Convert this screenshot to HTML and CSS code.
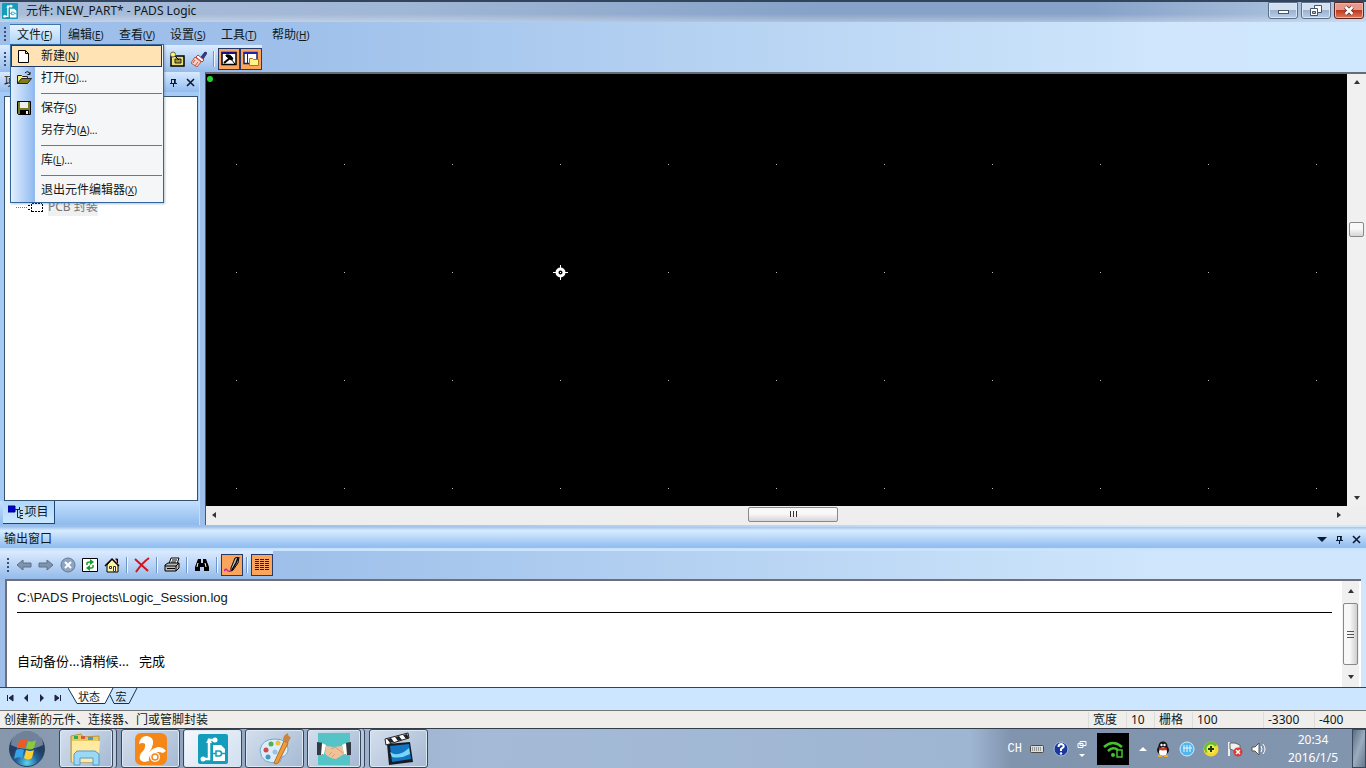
FILE: index.html
```html
<!DOCTYPE html>
<html lang="zh-CN">
<head>
<meta charset="utf-8">
<title>元件: NEW_PART* - PADS Logic</title>
<link rel="stylesheet" href="styles.css">
</head>
<body>
<svg class="defs" aria-hidden="true">
  <symbol id="pads" viewBox="0 0 30 30">
    <rect width="30" height="30" rx="2" fill="#149dba"/>
    <path d="M4 25h7V6h5" fill="none" stroke="#fff" stroke-width="2.5"/>
    <path d="M8 9l3-5 3 5z" fill="#fff"/><circle cx="17" cy="6" r="2.500" fill="#fff"/><circle cx="5" cy="25" r="2.500" fill="#fff"/>
    <path d="M15 11h8l4 4v12H15z" fill="#fff"/>
    <path d="M18 17h3a2.500 2.500 0 0 1 0 5h-3zM15 19.500h3m6 0h3" fill="none" stroke="#149dba" stroke-width="1.500"/>
  </symbol>
  <symbol id="pin" viewBox="0 0 9 9"><path d="M2.500 1v4.500M6 1v4.500M2 1.500h5M1 5.500h7M4.500 6v3" fill="none" stroke="#0b1a33"/><path d="M5 1h1.500v4H5z" fill="#0b1a33"/></symbol>
  <symbol id="cross" viewBox="0 0 9 9"><path d="M1 1l7 7M8 1L1 8" stroke="#0b1a33" stroke-width="1.600"/></symbol>
  <symbol id="tri" viewBox="0 0 8 8"><path d="M1 6l3-4 3 4z" fill="#333"/></symbol>
</svg>

<header class="titlebar">
  <svg class="app-icon"><use href="#pads"/></svg>
  <h1 class="title">元件: NEW_PART* - PADS Logic</h1>
  <div class="win-buttons">
    <button class="win-btn" aria-label="最小化"><svg width="28" height="15"><rect x="9.500" y="7.500" width="10" height="3" fill="#fff" stroke="#465468"/></svg></button>
    <button class="win-btn" aria-label="还原"><svg width="28" height="15"><path d="M12.500 2.500h7v7h-7z" fill="#fff" stroke="#465468"/><path d="M8.500 5.500h7v7h-7z" fill="#fff" stroke="#465468"/><path d="M10.500 8.500h3v2h-3z" fill="#a9bdd6" stroke="#465468"/></svg></button>
    <button class="win-btn close" aria-label="关闭"><svg width="28" height="15"><path d="M10.500 4l7 7m0-7l-7 7" stroke="#56302d" stroke-width="4"/><path d="M10.500 4l7 7m0-7l-7 7" stroke="#fff" stroke-width="2.500"/></svg></button>
  </div>
</header>

<div class="commands">
  <nav class="menubar">
    <i class="grip"></i>
    <div class="menu-slot">
      <button class="menu open">文件<span class="key">(<u>F</u>)</span></button>
      <div class="dropdown">
        <button class="entry active"><svg class="ico"><path d="M2.500 2.500h7l3 3v9h-10zM9.500 2.500v3h3" fill="#fff" stroke="#000"/></svg>新建<span class="key">(<u>N</u>)</span></button>
        <button class="entry"><svg class="ico"><path d="M1.500 13.500v-8h4l1 1h5v3" fill="#f6ec7b" stroke="#222"/><path d="M1.500 13.500l4-5h10l-4 5z" fill="#827b12" stroke="#222"/><path d="M9 3q3-3 5 1m0-2v2.500h-2.500" fill="none" stroke="#111"/></svg>打开<span class="key">(<u>O</u>)...</span></button>
        <hr class="sep">
        <button class="entry"><svg class="ico"><path d="M1.500 1.500h13v13h-12l-1-1z" fill="#777b22" stroke="#000"/><path d="M4 2h8v6H4z" fill="#eee"/><path d="M4 10h9v5H4z" fill="#000"/><path d="M10 11h2v3h-2z" fill="#eee"/></svg>保存<span class="key">(<u>S</u>)</span></button>
        <button class="entry"><i class="ico"></i>另存为<span class="key">(<u>A</u>)...</span></button>
        <hr class="sep">
        <button class="entry"><i class="ico"></i>库<span class="key">(<u>L</u>)...</span></button>
        <hr class="sep">
        <button class="entry"><i class="ico"></i>退出元件编辑器<span class="key">(<u>X</u>)</span></button>
      </div>
    </div>
    <button class="menu">编辑<span class="key">(<u>E</u>)</span></button>
    <button class="menu">查看<span class="key">(<u>V</u>)</span></button>
    <button class="menu">设置<span class="key">(<u>S</u>)</span></button>
    <button class="menu">工具<span class="key">(<u>T</u>)</span></button>
    <button class="menu">帮助<span class="key">(<u>H</u>)</span></button>
  </nav>
  <div class="toolbar main-tools">
    <i class="grip"></i>
    <button class="tool first" aria-label="元件"><svg class="ico"><path d="M2 5h13v10H2z" fill="#e7df75" stroke="#000" stroke-width="1.500"/><path d="M6 8h6v4H6z" fill="#a39b32" stroke="#222"/><path d="M5 4l5 5" stroke="#000"/><circle cx="4" cy="3.500" r="2.500" fill="#fff76b" stroke="#665"/></svg></button>
    <button class="tool" aria-label="刷新"><svg class="ico"><path d="M10 6l4-5 2 1-4 6z" fill="#2d3f94" stroke="#29306b"/><path d="M7 4l6 5-2 2-6-5z" fill="#fff" stroke="#b0413a"/><path d="M4 6l6 5-4 5-6-4z" fill="#f7d3c2" stroke="#c0534a"/><path d="M4 9l-2 3m5-1l-3 4" stroke="#c0534a"/></svg></button>
    <i class="bar"></i>
    <button class="tool on" aria-label="编辑工具"><svg class="ico"><path d="M1 1.500h14v12H1z" fill="#fff" stroke="#000" stroke-width="1.500"/><path d="M1 2h14" stroke="#118" stroke-width="2"/><path d="M3 12l6-5" stroke="#000" stroke-width="2"/><path d="M5 4q5-1 7 4l-2 1-5-4zM10 8l4 5" fill="#000" stroke="#000"/></svg></button>
    <button class="tool on" aria-label="项目浏览器"><svg class="ico"><path d="M1 1.500h13v11H1z" fill="#fff" stroke="#225" stroke-width="1.500"/><path d="M1 2h13" stroke="#22a" stroke-width="2"/><path d="M4.500 3v9" stroke="#225"/><path d="M6.500 14.500v-7h3l1 1h5v6z" fill="#fff388" stroke="#b3721c"/></svg></button>
  </div>
</div>

<main class="workspace">
  <aside class="project">
    <div class="panel-head"><span class="grow">项</span><button class="mini" aria-label="固定"><svg width="9" height="9"><use href="#pin"/></svg></button><button class="mini" aria-label="关闭"><svg width="9" height="9"><use href="#cross"/></svg></button></div>
    <div class="tree">
      <div class="node"><svg width="28" height="14"><path d="M0 7.500h12" stroke="#777" stroke-dasharray="1 1"/><path d="M16 3.500h10M16 11.500h10M15.500 4v8M26.500 4v8M12 5.500h3m-3 4h3" fill="none" stroke="#000" stroke-dasharray="2 1"/></svg><span class="node-name">PCB 封装</span></div>
    </div>
    <div class="project-tabs"><button class="project-tab"><svg width="16" height="14"><path d="M0 1h7v6H0z" fill="#00c" stroke="#008"/><path d="M7 4.500h4M9.500 5v7.500h2M15 5.500h-3v3h3M15 10.500h-3v3h3M11.500 2v3" fill="none" stroke="#222"/></svg>项目</button></div>
  </aside>
  <section class="view">
    <div class="view-row">
      <svg class="drawing" aria-label="绘图区">
        <defs><pattern id="grid" x="30" y="90" width="108" height="108" patternUnits="userSpaceOnUse"><rect width="1" height="1" fill="#bbb"/></pattern></defs>
        <rect width="100%" height="100%" fill="url(#grid)"/>
        <circle cx="4" cy="5" r="3" fill="#27d22f"/>
        <path d="M354.500 191v15M347 198.500h15" stroke="#fff"/><circle cx="354.500" cy="198.500" r="3.500" fill="#000" stroke="#fff" stroke-width="3"/><rect x="354" y="198" width="1" height="1" fill="#fff"/>
      </svg>
      <div class="vscroll"><svg class="arrow"><use href="#tri"/></svg><i class="space-a"></i><i class="thumb v-thumb"></i><i class="space-b"></i><svg class="arrow down"><use href="#tri"/></svg></div>
    </div>
    <div class="hscroll"><svg class="arrow left"><use href="#tri"/></svg><i class="space-c"></i><i class="thumb h-thumb"><svg width="9" height="7"><path d="M1.500 0v6m3-6v6m3-6v6" stroke="#333"/></svg></i><i class="space-d"></i><svg class="arrow right"><use href="#tri"/></svg></div>
  </section>
</main>

<section class="output">
  <div class="panel-head output-head"><span class="grow">输出窗口</span><button class="mini" aria-label="菜单"><svg width="10" height="9"><path d="M0 2h10L5 7z" fill="#0b1a33"/></svg></button><button class="mini" aria-label="固定"><svg width="9" height="9"><use href="#pin"/></svg></button><button class="mini" aria-label="关闭"><svg width="9" height="9"><use href="#cross"/></svg></button></div>
  <div class="toolbar out-tools">
    <i class="grip"></i>
    <button class="tool" aria-label="后退"><svg class="ico"><path d="M1 8l6-5v3h8v4H7v3z" fill="#7f93ad" stroke="#5d7189"/></svg></button>
    <button class="tool" aria-label="前进"><svg class="ico"><path d="M15 8L9 3v3H1v4h8v3z" fill="#7f93ad" stroke="#5d7189"/></svg></button>
    <button class="tool" aria-label="停止"><svg class="ico"><circle cx="8" cy="8" r="7" fill="#8ea5c2" stroke="#647b98"/><path d="M5 5l6 6m0-6l-6 6" stroke="#fff" stroke-width="2"/></svg></button>
    <button class="tool" aria-label="刷新"><svg class="ico"><path d="M.5 1.500h15v13H.5z" fill="#fff" stroke="#000"/><path d="M5 8V6q0-1 3-1M11 8v2q0 1-3 1" fill="none" stroke="#169b2c" stroke-width="1.500"/><path d="M8 2l4 3-4 3zM8 8l-4 3 4 3z" fill="#169b2c"/></svg></button>
    <button class="tool" aria-label="主页"><svg class="ico"><path d="M11.500 2h2v4" fill="#a22" stroke="#000"/><path d="M3 8v7h11V8L8 2z" fill="#fff4a0" stroke="#000"/><path d="M1 9l7-7 7 7" fill="none" stroke="#000" stroke-width="1.500"/><path d="M5.500 9.500h2v2h-2zM9.500 9.500h2v5h-2z" fill="#fff" stroke="#333"/></svg></button>
    <i class="bar"></i>
    <button class="tool" aria-label="清除"><svg class="ico"><path d="M1 2l13 12M15 1Q8 6 2 15" fill="none" stroke="#d5121b" stroke-width="2"/></svg></button>
    <i class="bar"></i>
    <button class="tool" aria-label="打印"><svg class="ico"><path d="M5 7l2-6h8l-2 6z" fill="#fff" stroke="#000"/><path d="M8 3h5M7 5h5" stroke="#000"/><path d="M1 8l3-2h11v5l-3 3H1z" fill="#bbb" stroke="#000"/><path d="M1 9h11v5M3 11.500h8M12 9l3-3" fill="none" stroke="#000"/></svg></button>
    <i class="bar"></i>
    <button class="tool" aria-label="查找"><svg class="ico"><path d="M4 2h3v4h2V2h3l3 8v4h-5v-4H6v4H1v-4z" fill="#000"/><path d="M4 6l-1 4m8-4l1 4" stroke="#fff"/></svg></button>
    <i class="bar"></i>
    <button class="tool on" aria-label="记录"><svg class="ico"><path d="M11 1l4-1-1 6-5 7-2 1v-3z" fill="#bdbdbd" stroke="#000"/><path d="M14 1l-2 5-4 7" fill="none" stroke="#000" stroke-width="1.500"/><path d="M0 14q2-3 3-1t4 1" fill="none" stroke="#d018b3" stroke-width="1.500"/></svg></button>
    <i class="bar"></i>
    <button class="tool on" aria-label="列表"><svg class="ico"><path d="M1 2.500h14M1 4.500h14M1 6.500h14M1 8.500h14M1 10.500h14M1 12.500h14" stroke="#3c1a10" stroke-dasharray="4 1"/></svg></button>
  </div>
  <div class="log-frame">
    <div class="log">
      <a class="log-link">C:\PADS Projects\Logic_Session.log</a>
      <hr class="rule">
      <p class="message">自动备份...请稍候...&nbsp;&nbsp; 完成</p>
    </div>
    <div class="log-scroll"><svg class="arrow"><use href="#tri"/></svg><i class="thumb log-thumb"><svg width="7" height="9"><path d="M0 1.500h7m-7 3h7m-7 3h7" stroke="#555"/></svg></i><svg class="arrow down"><use href="#tri"/></svg></div>
  </div>
  <div class="sheet-tabs">
    <button class="step" aria-label="第一个"><svg width="8" height="8"><path d="M1.500 1v6M7 1v6L3 4z" fill="#224" stroke="#224"/></svg></button>
    <button class="step" aria-label="上一个"><svg width="8" height="8"><path d="M6 0v8L2 4z" fill="#224"/></svg></button>
    <button class="step" aria-label="下一个"><svg width="8" height="8"><path d="M2 0v8l4-4z" fill="#224"/></svg></button>
    <button class="step" aria-label="最后一个"><svg width="8" height="8"><path d="M6.500 1v6M1 1v6l4-3z" fill="#224" stroke="#224"/></svg></button>
    <button class="sheet chosen"><svg class="shape" viewBox="0 0 46 17"><path d="M0 0l9 15.500h28L45 0" fill="#fff" stroke="#12324f"/></svg><span>状态</span></button>
    <button class="sheet"><svg class="shape" viewBox="0 0 30 17"><path d="M0 7l4 8.500h15L27 0" fill="none" stroke="#12324f"/></svg><span>宏</span></button>
  </div>
</section>

<footer class="status"><span class="grow">创建新的元件、连接器、门或管脚封装</span><span class="cell label">宽度</span><span class="cell short">10</span><span class="cell label">栅格</span><span class="cell long">100</span><span class="cell mid">-3300</span><span class="cell mid">-400</span></footer>

<nav class="taskbar">
  <button class="start" aria-label="开始"><svg width="38" height="38"><defs><radialGradient id="orb" cx=".5" cy=".9"><stop offset="0" stop-color="#5bd5f3"/><stop offset=".6" stop-color="#24649b"/><stop offset="1" stop-color="#223f63"/></radialGradient></defs><circle cx="19" cy="19" r="17.500" fill="url(#orb)" stroke="#29425f"/><path d="M3 15a16 14 0 0 1 32 0q-16 8-32 0z" fill="#fff" opacity=".35"/><path d="M11 11q4-3 8-1l-2 8q-4-2-8 1z" fill="#ee5b22"/><path d="M20 11q4 2 8-1l-2 8q-4 3-8 0z" fill="#8cc83c"/><path d="M8 20q4-2 8 0l-2 8q-4-2-8 1z" fill="#36a2e8"/><path d="M18 20q4 2 8 0l-2 8q-4 3-8 0z" fill="#ffce31"/></svg></button>
  <button class="task stacked" aria-label="资源管理器"><svg class="pic" viewBox="0 0 34 34"><path d="M2 4l10-2 2 3 16-1v26H2z" fill="#e9c95c" stroke="#b99737"/><path d="M3 9h28l-1 21H3z" fill="#ffeaa0"/><path d="M5 4h4v3H5z" fill="#3aa457"/><path d="M12 4h4v3h-4z" fill="#d85846"/><path d="M19 5h5v3h-5z" fill="#499acb"/><path d="M5 33V22l3-3h18l4 3v11h-6v-7H11v7z" fill="#9bd8f8" stroke="#509dcc"/></svg></button>
  <button class="task" aria-label="浏览器"><svg class="pic" viewBox="0 0 34 34"><rect x="1" y="1" width="32" height="32" rx="6" fill="#f58718"/><path d="M5 12q1-8 8-8 7 1 6 8-1 5-4 8 4-4 9-5 5 0 8 4l-3 2q-5-2-10 0-5 3-4 8l-5 1q-7-2-3-9 5-4 4-9-2-2-6 0z" fill="#fff"/><circle cx="21" cy="25" r="5" fill="#fff"/><circle cx="21" cy="25" r="3" fill="none" stroke="#f58718" stroke-width="1.500"/></svg></button>
  <button class="task current" aria-label="PADS Logic"><svg class="pads-pic"><use href="#pads"/></svg></button>
  <button class="task" aria-label="画图"><svg class="pic" viewBox="0 0 34 34"><path d="M2 18Q4 7 17 7q13 0 13 10 0 6-6 8l-2 5Q3 34 2 18z" fill="#dcecf8" stroke="#6faac9"/><circle cx="8" cy="18" r="2.500" fill="#d34948"/><circle cx="13" cy="12" r="2.500" fill="#52af55"/><circle cx="20" cy="11" r="2.500" fill="#ebc344"/><circle cx="10" cy="25" r="2.500" fill="#3f9ac9"/><circle cx="17" cy="20" r="2.500" fill="#91c7e5"/><path d="M18 32l-2-1 10-22 4 2-10 20z" fill="#ef9c3d" stroke="#b66b28"/><path d="M25 8q0-5 5-7 0 4 3 4l-3 6z" fill="#cc8444"/></svg></button>
  <button class="task stacked" aria-label="远程协助"><svg class="pic" viewBox="0 0 34 34"><path d="M1 1h32v32H1z" fill="#55c4c7"/><path d="M0 10l6 1v12H0z" fill="#333a42"/><path d="M34 10l-6 1v12h6z" fill="#333a42"/><path d="M5 11l4 2-2 9-3 1zM29 11l-4 2 2 9 3 1z" fill="#fff"/><path d="M9 14l7 1 9-1 2 8-8 5q-5 0-11-5z" fill="#efc29a"/><path d="M14 17l4-2 8 6M12 23l3-3m0 5l3-3" fill="none" stroke="#d69d76"/></svg></button>
  <button class="task" aria-label="视频"><svg class="pic" viewBox="0 0 34 34"><path d="M5 12l23-2 3 20-24 3z" fill="#151c24"/><path d="M8 14l19-2 2 15-19 3z" fill="#1275c4"/><path d="M8 20q8 6 19-4l1 6q-9 5-18 3z" fill="#79d6fb"/><path d="M3 7l23-6 1 5-23 7z" fill="#fff" stroke="#222"/><path d="M5 7l4-1 3 4-4 1zm8-2l4-1 3 4-4 1zm8-2l4-1 2 4-3 1z" fill="#222"/></svg></button>
  <div class="tray">
    <span class="lang">CH</span>
    <button class="mini" aria-label="键盘"><svg width="15" height="10"><rect x=".5" y="1.500" width="13" height="7" rx="1" fill="#ddd" stroke="#4c4b45"/><path d="M2 4h10M2 6h10" stroke="#555" stroke-dasharray="1 1"/></svg></button>
    <button class="mini" aria-label="帮助"><svg width="16" height="16"><circle cx="8" cy="8" r="7" fill="#19389d" stroke="#a9bce6"/><path d="M5.500 6q0-3 3-3 3 1 2 3L8 8v2" fill="none" stroke="#fff" stroke-width="2"/><circle cx="8" cy="12.500" r="1.200" fill="#fff"/></svg></button>
    <button class="mini" aria-label="选项"><svg width="10" height="18"><path d="M3 1.500h6v4H3zM1 3.500h5v4H1z" fill="#7f93ac" stroke="#fff"/><path d="M2 14h6l-3 3z" fill="#fff"/></svg></button>
    <svg class="wifi" width="32" height="32"><path d="M0 0h32v32H0z" fill="#000"/><path d="M7 14q9-8 18 0M11 18q5-5 10-1" fill="none" stroke="#43c52b" stroke-width="2.500"/><circle cx="16" cy="22" r="2" fill="#43c52b"/><rect x="20" y="17" width="5" height="7" fill="#000" stroke="#43c52b" stroke-width="1.500"/></svg>
    <button class="mini" aria-label="显示隐藏图标"><svg width="8" height="8"><path d="M0 6l4-4 4 4z" fill="#fff"/></svg></button>
    <svg class="sys" viewBox="0 0 16 16"><ellipse cx="8" cy="9" rx="6" ry="5" fill="#151515"/><circle cx="8" cy="5" r="4.500" fill="#151515"/><ellipse cx="8" cy="11" rx="4" ry="3.500" fill="#fff"/><circle cx="6.500" cy="4" r="1.200" fill="#fff"/><circle cx="9.500" cy="4" r="1.200" fill="#fff"/><path d="M4 6.500q4 2 8 0v2q-4 2-8 0z" fill="#e2331f"/><path d="M5 6h6l-3 1z" fill="#f3ab20"/><path d="M3 14h4v2H3zm6 0h4v2H9z" fill="#f3ab20"/></svg>
    <svg class="sys" viewBox="0 0 16 16"><circle cx="8" cy="8" r="7" fill="#51b5ef" stroke="#d5effc"/><path d="M5 4v7m3-7v7m3-7v7M4 7h9" stroke="#e5f8ff"/></svg>
    <svg class="sys" viewBox="0 0 16 16"><circle cx="8" cy="8" r="7.500" fill="#f6d629"/><path d="M1 8a7 7 0 0 1 13-4L9 8l-6 4z" fill="#64be39"/><circle cx="8" cy="8" r="4.500" fill="#f9e84a"/><path d="M8 5v6M5 8h6" stroke="#173e16" stroke-width="2"/></svg>
    <svg class="sys" viewBox="0 0 16 16"><path d="M2 1v14" stroke="#eee" stroke-width="2"/><path d="M3 2h5l5 2v6H8L3 8z" fill="#f0f0f0" stroke="#666"/><circle cx="11" cy="11" r="4.500" fill="#d93935"/><path d="M9 9l4 4m0-4l-4 4" stroke="#fff" stroke-width="1.500"/></svg>
    <svg class="sys" viewBox="0 0 16 16"><path d="M1 6h3l4-4v12l-4-4H1z" fill="#fff" stroke="#555"/><path d="M10 5q2 3 0 6m2-8q4 5 0 10" fill="none" stroke="#fff"/></svg>
    <time class="clock" datetime="2016-01-05T20:34">20:34<br>2016/1/5</time>
    <button class="desktop" aria-label="显示桌面"></button>
  </div>
</nav>
</body>
</html>
```
FILE: styles.css
```css
* { box-sizing: border-box; }
body {
  margin: 0;
  height: 100vh;
  display: flex;
  flex-direction: column;
  overflow: hidden;
  font: 12px/18px "Noto Sans", "Noto Sans CJK SC", sans-serif;
  color: #101820;
  background: linear-gradient(90deg, #9dbfe9, #9dbfe9 20%, #cfe6fc 85%, #d0e8fe);
}
button { font: inherit; color: inherit; border: 0; padding: 0; margin: 0; background: none; }
svg { display: block; flex: none; }
i { display: block; flex: none; }
.defs { position: absolute; width: 0; height: 0; }
.grow { flex: 1; }

.titlebar {
  display: flex;
  align-items: center;
  height: 22px;
  flex: none;
  padding-bottom: 2px;
  border-top: 2px solid #33455c;
  background: linear-gradient(#ffffff00 60%, #ffffff55), linear-gradient(90deg, #a9bdd9, #a0b7d6 30%, #86a2c8 60%, #86a2c8 80%, #b5cae4);
}
.app-icon { width: 16px; height: 16px; margin: 0 8px 0 2px; }
.title { flex: 1; margin: 0; font-size: 12px; font-weight: 400; }
.win-buttons { display: flex; gap: 3px; align-self: flex-start; padding-right: 2px; }
.win-btn {
  width: 30px;
  height: 17px;
  border: 1px solid #5b6f8b;
  border-radius: 0 0 3px 3px;
  background: linear-gradient(#d3e0f0 45%, #9bb3d1 50%, #b9cee7);
  box-shadow: inset 0 0 0 1px #d9e6f5;
}
.win-btn.close { border-color: #5c2522; background: linear-gradient(#e39a8a 45%, #c0391e 50%, #dc7b5b); box-shadow: inset 0 0 0 1px #eeb4a7; }

.menubar { display: flex; align-items: center; height: 23px; padding: 1px 0 0 4px; }
.grip { width: 2px; height: 14px; margin-right: 4px; background: repeating-linear-gradient(#354f78 0 2px, transparent 2px 4px); }
.menu-slot { position: relative; }
.menu { width: 51px; height: 21px; text-align: left; padding-left: 7px; white-space: nowrap; border: solid transparent; border-width: 1px 1px 0 0; }
.menu.open { border-color: #3f73ad; background: linear-gradient(#e5f3ff, #a9d2f7); }
.key { font-size: 10px; }
.dropdown {
  position: absolute;
  left: 0;
  top: 20px;
  z-index: 5;
  width: 154px;
  padding: 0 1px 1px 0;
  border: 1px solid #2f66a0;
  background: linear-gradient(90deg, #e2efff, #8fb8ef 24px, #f5f6f8 24px);
  box-shadow: 1px 1px 2px #4b698566;
}
.entry { display: flex; align-items: center; width: 100%; height: 22px; padding-left: 5px; white-space: nowrap; }
.entry .ico { margin-right: 9px; }
.entry.active { border: 1px solid #1f3c66; padding-left: 4px; background: #ffe3b5; }
.ico { width: 16px; height: 16px; }
.sep { height: 1px; margin: 4px 0 3px 30px; border: 0; background: #4a81b5; }

.toolbar { display: flex; align-items: center; width: fit-content; padding-left: 4px; background: linear-gradient(#dcebff, #94bbea); }
.main-tools { height: 27px; }
.out-tools { height: 28px; padding-left: 7px; }
.tool { display: grid; place-items: center; width: 22px; height: 22px; flex: none; }
.tool.first { margin-left: 156px; }
.tool.on { border: 1px solid #26396b; background: #fba45c; }
.bar { width: 1px; height: 16px; margin: 0 4px 0 3px; background: #6d95c6; box-shadow: 1px 0 #eef7ff; }

.workspace { display: flex; flex: 1; min-height: 0; gap: 5px; padding-bottom: 2px; }
.project { display: flex; flex-direction: column; width: 200px; flex: none; border-right: 1px solid #c4defa; background: #a4cbf5; }
.panel-head { display: flex; align-items: center; gap: 8px; height: 20px; padding: 0 4px; flex: none; background: linear-gradient(#d7eaff, #91bcef); }
.mini { display: grid; place-items: center; }
.tree { flex: 1; margin: 4px 1px 0 4px; padding: 101px 0 0 11px; background: #fff; border: 1px solid #38536d; }
.node { display: flex; align-items: center; gap: 4px; color: #777; }
.node-name { background: #f0f0f0; }
.project-tabs { height: 24px; padding-left: 3px; background: linear-gradient(#c4e0ff, #8ebbed); }
.project-tab { display: flex; align-items: center; justify-content: center; width: 52px; height: 23px; border: solid #1e4878; border-width: 0 1px 1px 0; background: linear-gradient(#b0d8fb, #cae7ff); }
.view { flex: 1; display: flex; flex-direction: column; min-width: 0; border-left: 1px solid #555; border-top: 2px solid #666d76; background: #eee; }
.view-row { display: flex; flex: 1; min-height: 0; }
.drawing { flex: 1 1 0; width: 0; min-width: 0; height: 100%; background: #000; }
.vscroll, .log-scroll { display: flex; flex-direction: column; align-items: center; background: #f0f0f0; }
.vscroll { width: 19px; padding: 4px 2px; }
.arrow { width: 8px; height: 8px; }
.arrow.down { transform: rotate(180deg); }
.arrow.left { transform: rotate(-90deg); }
.arrow.right { transform: rotate(90deg); }
.space-a { flex: 136; }
.space-b { flex: 257; }
.thumb { display: grid; place-items: center; border: 1px solid #898989; border-radius: 2px; background: linear-gradient(#f8f8f8 45%, #d6d6d6); }
.v-thumb { width: 15px; height: 15px; }
.hscroll { display: flex; align-items: center; height: 19px; padding: 0 23px 2px 4px; }
.space-c { flex: 529; }
.space-d { flex: 496; }
.h-thumb { width: 90px; height: 15px; }

.output { flex: none; background: linear-gradient(90deg, #9dbfe9, #9dbfe9 20%, #cfe6fc 85%); }
.output-head { height: 24px; padding-right: 5px; background: linear-gradient(#a0c5ee, #d8ebff 15%, #8fbcf0 85%, #cbe4ff 90%); }
.log-frame { display: flex; height: 108px; margin: 0 5px; border: solid #6e6e7c; border-width: 2px 0 0 2px; background: #fff; }
.log { flex: 1; padding: 8px 10px; }
.log-link { display: block; font: 13px/18px "Liberation Sans", sans-serif; }
.rule { height: 1px; margin: 5px 0 38px; border: 0; background: #000; }
.message { margin: 0; font-size: 13px; line-height: 20px; color: #000; }
.log-scroll { width: 17px; margin-right: 2px; padding: 6px 1px; justify-content: space-between; }
.log-thumb { width: 15px; height: 62px; background: linear-gradient(90deg, #f8f8f8 45%, #cecece); }
.sheet-tabs { display: flex; height: 23px; padding-left: 2px; border-top: 1px solid #1e4878; background: #cce6ff; }
.step { display: grid; place-items: center; width: 16px; height: 20px; }
.sheet { position: relative; width: 42px; height: 17px; font-size: 11px; line-height: 16px; }
.sheet.chosen { margin-left: 2px; }
.sheet span { position: relative; }
.sheet:not(.chosen) { width: 22px; }
.shape { position: absolute; left: 0; top: 0; height: 17px; }

.status { display: flex; align-items: center; height: 18px; flex: none; padding: 0 1px 0 4px; border-top: 1px solid #777; background: #f0eeeb; }
.cell { border-left: 1px solid #ddd; padding-left: 4px; height: 16px; line-height: 16px; }
.label { width: 38px; }
.short { width: 28px; }
.long { width: 71px; }
.mid { width: 51px; }

.taskbar { display: flex; align-items: center; height: 40px; flex: none; border-top: 1px solid #333c48; background: linear-gradient(90deg, #8697ac, #a4bad6 35%, #9fb6d2 71%, #8094ad 74%, #8195ae); }
.start { width: 38px; margin: 0 13px 0 8px; }
.task { display: grid; place-items: center; width: 59px; height: 39px; margin-right: 3px; border: 1px solid #39465a; border-radius: 3px; background: linear-gradient(135deg, #d4dfed, #a5b9d3); box-shadow: inset 0 0 0 1px #dde8f5; }
.task.current { background: linear-gradient(135deg, #f6f9fd, #cfdeef); }
.task.stacked { width: 54px; margin-right: 8px; box-shadow: inset 0 0 0 1px #dde8f5, 3px 0 #b7c8de, 4px 0 #39465a; }
.pic { width: 34px; height: 34px; }
.pads-pic { width: 30px; height: 30px; }
.tray { display: flex; align-items: center; margin-left: auto; height: 100%; gap: 8px; color: #fff; }
.lang { font: 12px/16px "Liberation Mono", monospace; }
.wifi { margin: 0 2px; }
.sys { width: 16px; height: 16px; }
.clock { width: 62px; margin-left: 7px; text-align: center; }
.desktop { width: 14px; height: 39px; border: 1px solid #3b4859; background: linear-gradient(110deg, #5b6d82, #9bacbf, #66788d); }
```
